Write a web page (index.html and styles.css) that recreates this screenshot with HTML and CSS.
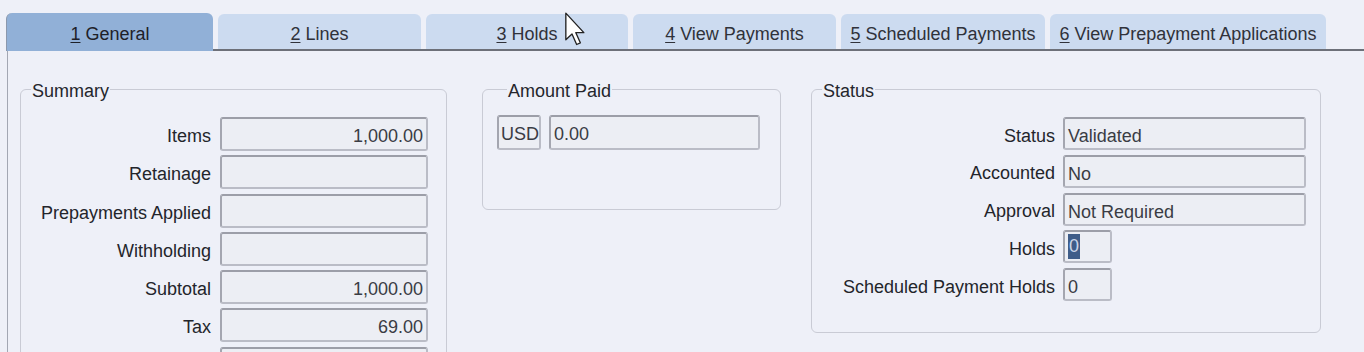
FILE: index.html
```html
<html><head>
<meta charset="UTF-8">
<meta name="viewport" content="width=device-width, initial-scale=1.0">
<title>Invoice: General</title>
<link rel="stylesheet" href="styles.css">
</head>
<body>
  <div class="screen">
    <div class="tabs">
      <div class="tab active t1"><u>1</u> General</div>
      <div class="tab t2"><u>2</u> Lines</div>
      <div class="tab t3"><u>3</u> Holds</div>
      <div class="tab t4"><u>4</u> View Payments</div>
      <div class="tab t5"><u>5</u> Scheduled Payments</div>
      <div class="tab t6"><u>6</u> View Prepayment Applications</div>
    </div>

    <div class="panel">
      <fieldset class="group summary">
        <legend>Summary</legend>
        <div class="form">
          <label>Items</label><div class="field num">1,000.00</div>
          <label>Retainage</label><div class="field num"></div>
          <label>Prepayments Applied</label><div class="field num"></div>
          <label>Withholding</label><div class="field num"></div>
          <label>Subtotal</label><div class="field num">1,000.00</div>
          <label>Tax</label><div class="field num">69.00</div>
          <label>Total</label><div class="field num"></div>
        </div>
      </fieldset>

      <fieldset class="group amount">
        <legend>Amount Paid</legend>
        <div class="amount-row">
          <div class="field currency">USD</div>
          <div class="field paid">0.00</div>
        </div>
      </fieldset>

      <fieldset class="group status">
        <legend>Status</legend>
        <div class="form">
          <label>Status</label><div class="field">Validated</div>
          <label>Accounted</label><div class="field">No</div>
          <label>Approval</label><div class="field">Not Required</div>
          <label>Holds</label><div class="field short"><span class="selected">0</span></div>
          <label>Scheduled Payment Holds</label><div class="field short">0</div>
        </div>
      </fieldset>
    </div>

    <!-- mouse pointer over the tab strip -->
    <svg class="pointer" width="20" height="34" viewBox="0 0 12 20">
      <polygon points="0.5,0.5 0.5,16.5 4.2,13 7,19.3 9.2,18.3 6.5,12.2 11.3,12.2" fill="#fff" stroke="#222" stroke-width="0.8" stroke-linejoin="round"/>
    </svg>
  </div>
</body></html>
```

FILE: styles.css
```css
html, body {
  margin: 0;
  padding: 0;
  height: 352px;
  overflow: hidden;
}
body {
  font-family: 'Liberation Sans', Arial, sans-serif;
  font-size: 18px;
  background-color: #eef0f8;
  color: #262830;
}
.screen {
  position: relative;
  height: 352px;
}
.tabs {
  display: flex;
  gap: 5px;
  margin-left: 6px;
  padding-top: 13px;
  height: 36px;
  border-bottom: 2px solid #6d7079;
}
.tab {
  box-sizing: border-box;
  height: 35px;
  margin-top: 1px;
  padding-top: 10px;
  text-align: center;
  line-height: 21px;
  white-space: nowrap;
  color: #30323a;
  background-color: #ccdbf0;
  border-top-left-radius: 6px;
  border-top-right-radius: 6px;
}
.tab u {
  text-decoration-thickness: 1px;
  text-underline-offset: 2px;
}
.tab.active {
  position: relative;
  margin-top: 0;
  margin-bottom: -2px;
  height: 38px;
  padding-top: 11px;
  background-color: #91b0d7;
  border-left: 1px solid #8b98ad;
  color: #1e2028;
}
.t1 { width: 207px; }
.t2 { width: 203px; }
.t3 { width: 202px; }
.t4 { width: 203px; }
.t5 { width: 204px; }
.t6 { width: 276px; }
.panel {
  display: flex;
  align-items: flex-start;
  margin-left: 7px;
  padding: 26px 0 0 12px;
  border-left: 1px solid #a3a7b3;
  height: 400px;
}
.group {
  box-sizing: border-box;
  margin: 0;
  min-width: 0;
  border: 1px solid #c9cbd5;
  border-radius: 6px;
}
.group legend {
  margin-left: 10px;
  padding: 4px 1px 0;
  line-height: 21px;
  color: #24262c;
}
.summary {
  width: 427px;
  padding: 15px 18px 40px 0;
}
.amount {
  width: 299px;
  margin-left: 35px;
  padding: 13px 0 59px 14px;
}
.status {
  width: 510px;
  margin-left: 30px;
  padding: 15px 14px 31px 0;
}
.form {
  display: grid;
  align-items: center;
  justify-items: end;
}
.summary .form {
  grid-template-columns: 1fr 208px;
  grid-auto-rows: 34px;
  column-gap: 9px;
  row-gap: 4.3px;
}
.status .form {
  grid-template-columns: 1fr 243px;
  grid-auto-rows: 33px;
  column-gap: 8px;
  row-gap: 4.8px;
}
.form label {
  padding-top: 5px;
  white-space: nowrap;
  color: #23252b;
}
.field {
  box-sizing: border-box;
  width: 100%;
  height: 100%;
  padding: 0 3px;
  line-height: 34px;
  color: #3a3c44;
  background-color: #eceef4;
  border: 2px solid #babcc6;
  border-top-color: #9c9ea8;
  border-left-color: #a4a6b0;
  border-radius: 3px;
  white-space: nowrap;
  overflow: hidden;
}
.field.num {
  text-align: right;
}
.field.short {
  width: 49px;
  justify-self: start;
}
.selected {
  display: inline-block;
  vertical-align: top;
  padding: 0 1px;
  line-height: 25px;
  margin-top: 2px;
  background-color: #3f5d89;
  color: #c9d5e8;
}
.amount-row {
  display: flex;
  gap: 8px;
  height: 35px;
}
.currency {
  width: 44px;
  padding: 0 2px;
}
.paid {
  width: 211px;
}
.pointer {
  position: absolute;
  left: 565px;
  top: 12px;
}
```
